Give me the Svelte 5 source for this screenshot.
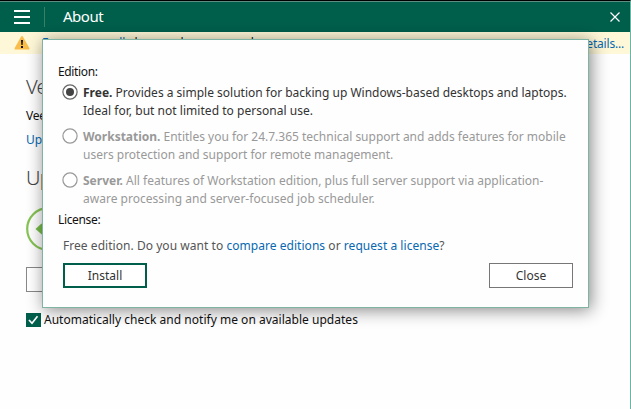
<script>
  const editions = [
    { name: 'Free.', first: 'Provides a simple solution for backing up Windows-based desktops and laptops.', second: 'Ideal for, but not limited to personal use.', active: true, s1: 0, s2: 0.03 },
    { name: 'Workstation.', first: 'Entitles you for 24.7.365 technical support and adds features for mobile', second: 'users protection and support for remote management.', active: false, s1: -0.01, s2: 0 },
    { name: 'Server.', first: 'All features of Workstation edition, plus full server support via application-', second: 'aware processing and server-focused job scheduler.', active: false, s1: 0, s2: 0.02 }
  ];
</script>

<div class="window">
  <header>
    <svg class="menu" width="16" height="14" viewBox="0 0 16 14"><path d="M0 1h16M0 7h16M0 13h16" stroke="#fff" stroke-width="1.8" /></svg>
    <span class="rule"></span>
    <h1>About</h1>
    <svg class="close" width="10" height="10" viewBox="0 0 10 10"><path d="M.5 .5l9 9M9.5 .5l-9 9" stroke="#fff" stroke-width="1.2" /></svg>
  </header>
  <div class="notice">
    <svg width="16" height="14" viewBox="0 0 16 14"><path d="M7 .8Q8 -.6 9 .8L15.3 12Q15.8 13.5 14.2 13.5H1.8Q.2 13.5 .7 12Z" fill="#f9bd4b" /><path d="M7 4h2l-.4 5H7.4zM7 10h2v2H7z" fill="#111" /></svg>
    <div class="message"><a href="#version">F</a><a class="mark" href="#version">ll</a><span class="m1">l</span><span class="m2">l</span><span class="m3">l</span></div>
    <a class="details" href="#details">Details...</a>
  </div>
  <main>
    <h2>Veeam</h2>
    <p>Veeam</p>
    <a class="update" href="#update">Update</a>
    <h2 class="updates">Updates</h2>
    <svg class="status" width="44" height="44" viewBox="0 0 44 44"><circle cx="22" cy="22" r="20.8" fill="none" stroke="#85c454" stroke-width="2.2" /><path d="M9.5 22l6-5.5L21 22l10-10 5 5-15 15z" fill="#78bb49" /></svg>
    <button class="check-now" aria-label="Check for updates"></button>
    <label class="auto">
      <svg width="15" height="14" viewBox="0 0 15 14"><path fill="#005f4b" d="M0 0h15v14H0z" /><path d="M3 7l3 3.3L11.5 3.3" fill="none" stroke="#fff" stroke-width="1.7" /></svg>
      <span>Automatically check and notify me on available updates</span>
    </label>
  </main>
  <section class="dialog">
    <div class="label">Edition:</div>
    {#each editions as e}
      <div class="option" class:active={e.active}>
        <svg width="16" height="16" viewBox="0 0 16 16"><circle cx="8" cy="8" r="7.1" fill="#fff" stroke={e.active ? '#666' : '#999'} stroke-width="1.2" />{#if e.active}<circle cx="8" cy="8" r="4" fill="#444" />{/if}</svg>
        <div class="copy">
          <div style="letter-spacing: {e.s1}px"><b>{e.name}</b> {e.first}</div>
          <div style="letter-spacing: {e.s2}px">{e.second}</div>
        </div>
      </div>
    {/each}
    <div class="label license">License:</div>
    <div class="question">Free edition. Do you want to <a href="#compare">compare editions</a> or <a href="#request">request a license</a>?</div>
    <div class="actions"><button class="primary">Install</button><button>Close</button></div>
  </section>
</div>

<style>
  :global(body) { margin: 0; overflow: hidden; }
  .window, .window * { box-sizing: border-box; }
  .window { position: relative; width: 631px; height: 409px; overflow: hidden; background: #fefefe; border-top: 1px solid #000; border-right: 1px solid #6bb5a4; font: 12px/18px "Noto Sans", "Open Sans", sans-serif; color: #111; white-space: nowrap; }
  header { height: 31px; display: flex; align-items: center; background: #005f4b; border-top: 1px solid #5d8c80; color: #fff; }
  .menu { margin-left: 14px; }
  .rule { width: 1px; height: 20px; margin-left: 14px; background: #398069; }
  h1 { margin: 0 0 3px 18px; font-size: 15px; line-height: 20px; font-weight: 400; letter-spacing: -.5px; }
  .close { margin: 0 10px 0 auto; }
  .notice { height: 22px; display: flex; align-items: center; padding: 0 6px 0 14px; background: #fff8d8; }
  a { color: #0868b1; text-decoration: none; }
  .message { display: flex; margin-left: 12px; }
  .mark { margin-left: 71px; }
  .m1 { margin-left: 9px; }
  .m2 { margin-left: 43px; }
  .m3 { margin-left: 67px; }
  .details { margin: 2px 0 0 auto; letter-spacing: -.2px; }
  main { padding-left: 26px; }
  h2 { margin: 20px 0 0; font-size: 20px; line-height: 26px; font-weight: 300; color: #444; letter-spacing: -.7px; }
  p { margin: 7px 0 0; letter-spacing: -.3px; }
  .update { display: block; margin-top: 6px; }
  .updates { margin-top: 16px; }
  .status { display: block; margin-top: 16px; }
  .check-now { display: block; width: 84px; height: 25px; margin-top: 16px; padding: 0; background: #fff; border: 1px solid #888; }
  .auto { display: flex; align-items: center; gap: 3px; height: 18px; margin-top: 19px; letter-spacing: .02px; }
  .dialog { position: absolute; left: 42px; top: 38px; width: 547px; height: 269px; padding: 23px 15px 0; background: #fefefe; border: 1px solid #7fb4a4; box-shadow: 2px 2px 16px rgba(0,0,0,.48); }
  .label { height: 18px; letter-spacing: -.35px; }
  .option { display: flex; height: 35px; gap: 5px; margin: 2px 0 9px 4px; color: #999; line-height: 17.5px; }
  .active { color: #333; }
  .option svg { flex: none; margin-top: 1px; }
  .copy { padding-top: 1px; }
  b { font-weight: 700; }
  .license { margin-top: -4px; }
  .question { margin: 8px 0 0 5px; color: #555; letter-spacing: .045px; }
  .actions { display: flex; justify-content: space-between; margin: 8px 0 0 5px; }
  .actions button { width: 84px; height: 25px; padding: 0; border: 1px solid #777; background: #fff; color: #333; font: inherit; font-size: 12px; line-height: 18px; }
  .actions .primary { border: 2px solid #005f4b; }
</style>
